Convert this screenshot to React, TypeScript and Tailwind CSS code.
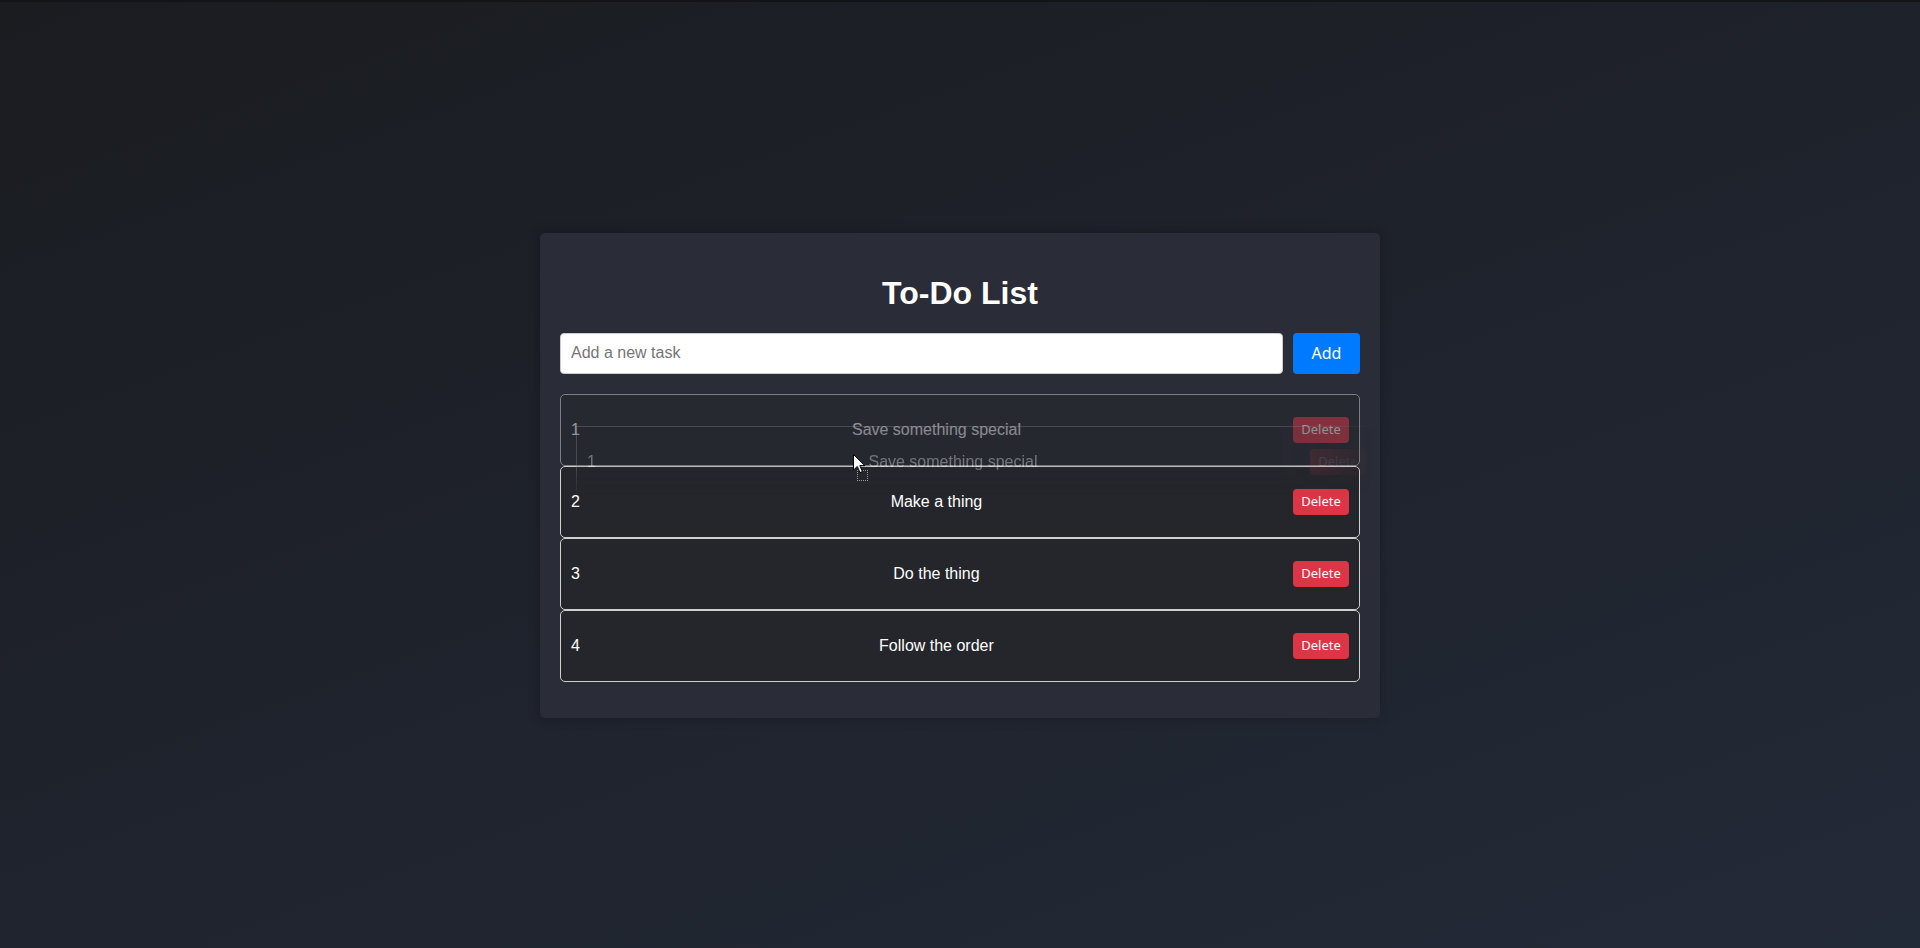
import React from "react";

const tasks = [
  { id: 1, text: "Save something special" },
  { id: 2, text: "Make a thing" },
  { id: 3, text: "Do the thing" },
  { id: 4, text: "Follow the order" },
];

function TaskRow({ n, text, dragging }: { n: number; text: string; dragging?: boolean }) {
  return (
    <li
      className={
        "flex h-[72px] items-center rounded-[5px] border border-[#cfcfcf] bg-[#25262c] px-[10px] text-[16px] text-white " +
        (dragging ? "opacity-50" : "")
      }
    >
      <span>{n}</span>
      <span className="flex-1 text-center">{text}</span>
      <button className="flex h-[26px] w-[56px] items-center justify-center rounded-[4px] bg-[#dc3545] font-['Noto_Sans',sans-serif] text-[13px] text-white">
        Delete
      </button>
    </li>
  );
}

function Cursor() {
  return (
    <div className="pointer-events-none absolute left-[293px] top-[60px] z-20">
      <svg width="13" height="20" viewBox="0 0 13 20">
        <path d="M0.5 0.5 L0.5 16 L4.3 12.4 L7 18.6 L9.4 17.6 L6.8 11.6 L11.8 11.6 Z" fill="#fff" stroke="#000" strokeWidth="1" />
      </svg>
      <div className="ml-[4px] mt-[-4px] h-[11px] w-[11px] border border-dotted border-[#9a9a9a]" />
    </div>
  );
}

export default function App() {
  return (
    <div className="flex h-[948px] w-full items-center justify-center border-t-2 border-[#131418] bg-[linear-gradient(160deg,#1a1c20_0%,#1e222b_45%,#232a37_100%)] font-['Liberation_Sans',Arial,sans-serif]">
      <div className="w-[840px] rounded-[5px] bg-[#2a2d37] px-[20px] pb-[20px] pt-[20px] shadow-[0_0_12px_rgba(0,0,0,0.25)]">
        <h1 className="mb-[21px] mt-[22px] text-center text-[32px] font-bold leading-[37px] text-white">To-Do List</h1>
        <div className="flex h-[41px] gap-[10px]">
          <input
            className="h-full flex-1 rounded-[4px] border border-[#cccccc] bg-white px-[10px] text-[16px] text-black outline-none placeholder:text-[#757575]"
            placeholder="Add a new task"
          />
          <button className="h-full w-[67px] rounded-[4px] bg-[#007bff] font-['Noto_Sans',sans-serif] text-[16px] text-white">
            Add
          </button>
        </div>
        <ul className="relative mb-[16px] mt-[20px]">
          {tasks.map((t) => (
            <TaskRow key={t.id} n={t.id} text={t.text} dragging={t.id === 1} />
          ))}
          <div className="pointer-events-none absolute left-[16px] top-[32px] z-10 w-[800px] [mask-image:linear-gradient(to_right,black_0%,black_88%,transparent_100%)]">
            <div className="flex h-[72px] items-center border-l border-t border-[#8a8a8a] bg-[#2a2b31]/30 px-[10px] text-[16px] text-white opacity-35 [mask-image:linear-gradient(to_bottom,black_0%,black_55%,transparent_100%)]">
              <span>1</span>
              <span className="flex-1 text-center">Save something special</span>
              <span className="flex h-[26px] w-[56px] items-center justify-center rounded-[4px] bg-[#dc3545] font-['Noto_Sans',sans-serif] text-[13px] opacity-60">
                Delete
              </span>
            </div>
          </div>
          <Cursor />
        </ul>
      </div>
    </div>
  );
}
